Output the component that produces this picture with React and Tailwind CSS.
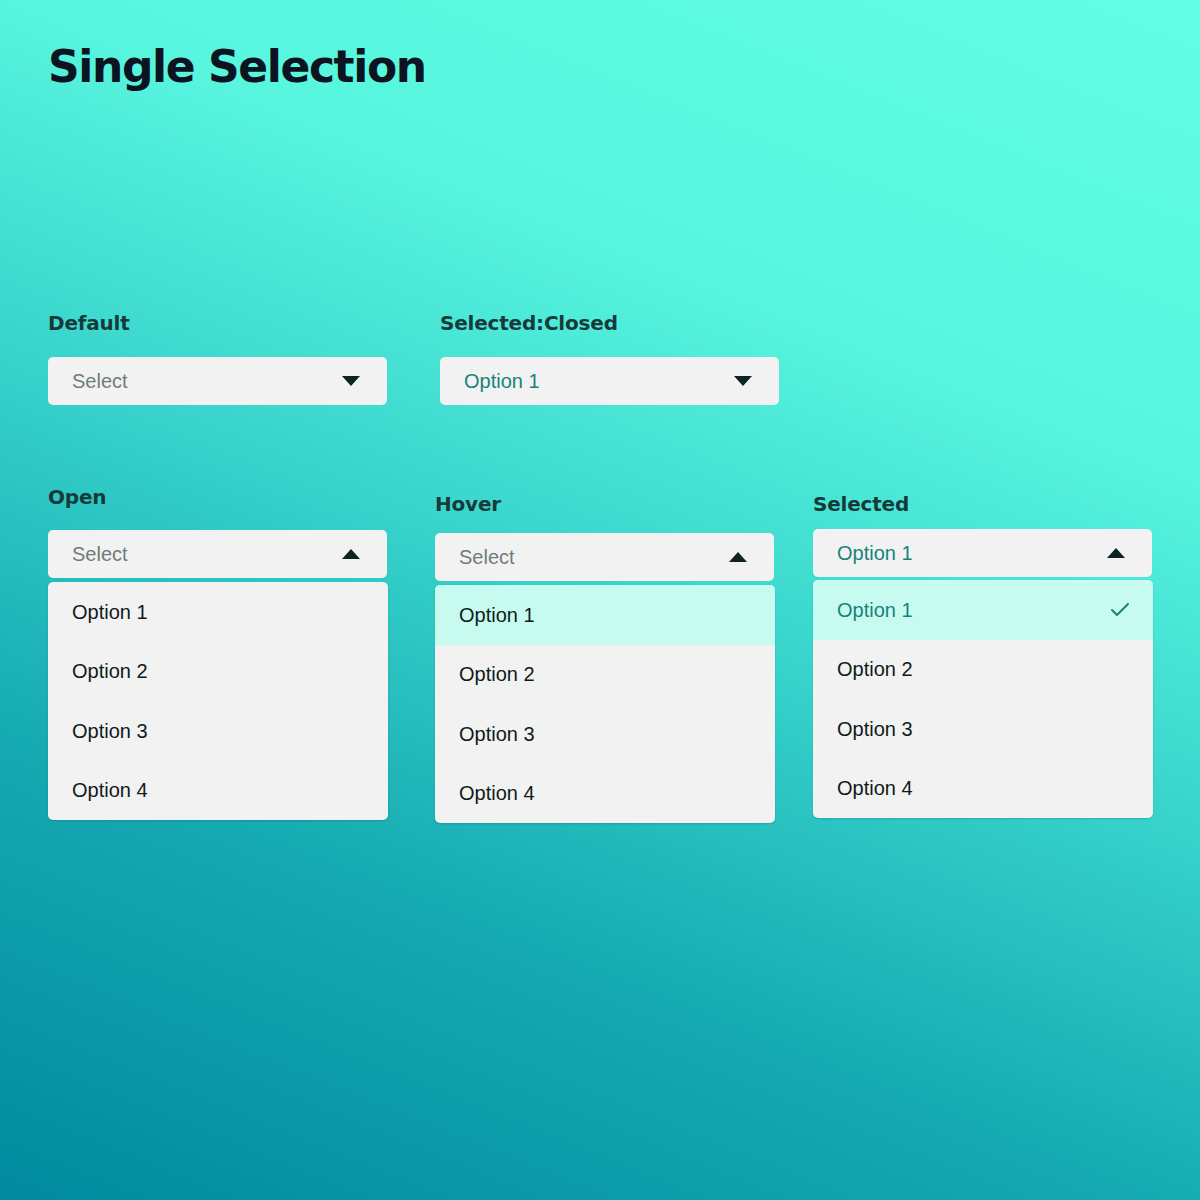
import { Check } from "lucide-react";

const OPTIONS = ["Option 1", "Option 2", "Option 3", "Option 4"];

function Caret({ up }) {
  return (
    <svg width="18" height="10" viewBox="0 0 18 10" className="shrink-0">
      {up ? (
        <polygon points="9,0 18,10 0,10" fill="#0c2424" />
      ) : (
        <polygon points="0,0 18,0 9,10" fill="#0c2424" />
      )}
    </svg>
  );
}

function Label({ children, className = "" }) {
  return (
    <div
      className={`font-['DejaVu_Sans',sans-serif] font-bold text-[20px] leading-[26px] tracking-[-0.2px] text-[#163a3a] ${className}`}
    >
      {children}
    </div>
  );
}

function Field({ value, placeholder, up }) {
  return (
    <div className="flex h-[48px] w-[339px] items-center justify-between rounded-[5px] bg-[#f2f2f2] pl-[24px] pr-[27px]">
      <span
        className={`text-[20px] ${
          value ? "text-[#17837a]" : "text-[#707c7c]"
        }`}
      >
        {value || placeholder}
      </span>
      <Caret up={up} />
    </div>
  );
}

function Menu({ active, selected, className = "" }) {
  return (
    <div
      className={`w-[340px] overflow-hidden rounded-[5px] bg-[#f2f2f2] shadow-[0_1px_2px_rgba(0,40,40,0.18)] ${className}`}
    >
      {OPTIONS.map((opt, i) => {
        const on = active === i;
        return (
          <div
            key={opt}
            className={`flex h-[59.5px] items-center justify-between pl-[24px] pr-[21px] text-[20px] ${
              on ? "bg-[#c7fbf0]" : ""
            } ${on && selected ? "text-[#17837a]" : "text-[#0f1b1b]"}`}
          >
            <span>{opt}</span>
            {on && selected && (
              <Check size={24} strokeWidth={2} color="#17837a" />
            )}
          </div>
        );
      })}
    </div>
  );
}

export default function App() {
  return (
    <div className="min-h-[1200px] w-full bg-[linear-gradient(22deg,#018a9e_0%,#16aab2_28%,#3ad6cd_52%,#58f5df_72%,#62ffe5_100%)] px-[48px] pt-[43px] font-['Liberation_Sans',Arial,sans-serif]">
      <h1 className="font-['DejaVu_Sans',sans-serif] text-[44px] font-bold leading-[48px] tracking-[-1.4px] text-[#0b1420]">
        Single Selection
      </h1>

      {/* row 1 */}
      <div className="mt-[219px] flex items-start gap-[53px]">
        <div>
          <Label className="mb-[21px]">Default</Label>
          <Field placeholder="Select" />
        </div>
        <div>
          <Label className="mb-[21px]">Selected:Closed</Label>
          <Field value="Option 1" />
        </div>
      </div>

      {/* row 2 */}
      <div className="mt-[79px] flex items-start">
        <div>
          <Label className="mb-[20px]">Open</Label>
          <Field placeholder="Select" up />
          <Menu className="mt-[4px]" />
        </div>
        <div className="ml-[47px] pt-[7px]">
          <Label className="mb-[16px]">Hover</Label>
          <Field placeholder="Select" up />
          <Menu className="mt-[4px]" active={0} />
        </div>
        <div className="ml-[38px] pt-[7px]">
          <Label className="mb-[12px]">Selected</Label>
          <Field value="Option 1" up />
          <Menu className="mt-[3px]" active={0} selected />
        </div>
      </div>
    </div>
  );
}
